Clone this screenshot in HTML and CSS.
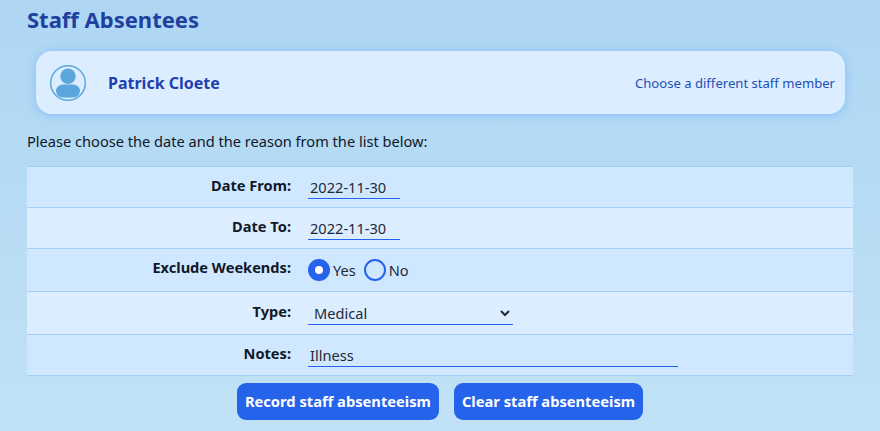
FILE: index.html
```html
<!DOCTYPE html>
<html lang="en">
<head>
<meta charset="utf-8">
<title>Staff Absentees</title>
<link rel="stylesheet" href="styles.css">
</head>
<body>
<main class="page">
  <h1 class="title">Staff Absentees</h1>
  <section class="staff-card">
    <svg class="avatar" viewBox="0 0 38 38" width="38" height="38" aria-hidden="true">
      <circle cx="19" cy="19" r="17.300" fill="none" stroke="#5ba6dd" stroke-width="1.500"/>
      <circle cx="19" cy="12.300" r="7.700" fill="#5ba6dd"/>
      <rect x="7" y="20.500" width="24" height="13" rx="6.500" fill="#5ba6dd"/>
    </svg>
    <span class="staff-name">Patrick Cloete</span>
    <a class="staff-link">Choose a different staff member</a>
  </section>
  <p class="intro">Please choose the date and the reason from the list below:</p>
  <form class="form">
    <div class="row row-odd">
      <label class="label" for="from">Date From:</label>
      <input class="field field-date" id="from" type="text" value="2022-11-30">
    </div>
    <div class="row row-even">
      <label class="label" for="to">Date To:</label>
      <input class="field field-date" id="to" type="text" value="2022-11-30">
    </div>
    <div class="row row-odd row-tall">
      <span class="label label-radio">Exclude Weekends:</span>
      <div class="radios">
        <span class="radio radio-on"></span><span class="radio-text">Yes</span>
        <span class="radio"></span><span class="radio-text">No</span>
      </div>
    </div>
    <div class="row row-even row-tall">
      <label class="label" for="type">Type:</label>
      <select class="field field-select" id="type"><option>Medical</option></select>
    </div>
    <div class="row row-odd">
      <label class="label" for="notes">Notes:</label>
      <input class="field field-notes" id="notes" type="text" value="Illness">
    </div>
    <div class="actions">
      <button class="btn" type="button">Record staff absenteeism</button>
      <button class="btn" type="button">Clear staff absenteeism</button>
    </div>
  </form>
</main>
</body>
</html>
```

FILE: styles.css
```css
* { box-sizing: border-box; }
html, body { height: 100%; }
body {
  margin: 0;
  overflow: hidden;
  background: linear-gradient(180deg, #aed6f3 0%, #c1e2f6 100%);
  font-family: "Noto Sans", sans-serif;
  color: #111827;
}
.page { padding: 5px 27px 0; }
.title {
  margin: 0;
  height: 28px;
  font-size: 22px;
  line-height: 28px;
  font-weight: 700;
  color: #1e40a0;
}
.staff-card {
  display: flex;
  align-items: center;
  height: 63px;
  margin: 18px 8px 0 9px;
  padding: 0 10px 0 13px;
  background: #dcedff;
  border-radius: 16px;
  box-shadow: 0 1px 10px #85bdf8;
}
.avatar { flex: none; }
.staff-name {
  margin-left: 21px;
  font-size: 16px;
  font-weight: 700;
  color: #1e40af;
}
.staff-link {
  margin-left: auto;
  font-size: 13.1px;
  color: #1e4fb5;
}
.intro {
  margin: 17px 0 0;
  height: 20px;
  font-size: 14.6px;
  line-height: 20px;
}
.form { margin-top: 15px; }
.row {
  display: flex;
  align-items: center;
  height: 41px;
  border-bottom: 1px solid #a3d0fb;
}
.row:first-child { height: 42px; border-top: 1px solid #a3d0fb; }
.row-tall { height: 43px; }
.row-odd { background: #d0e8ff; }
.row-even { background: #dcedff; }
.label {
  flex: none;
  width: 264px;
  margin-right: 17px;
  text-align: right;
  font-size: 14.6px;
  font-weight: 700;
  color: #111827;
  position: relative;
  top: -2px;
}
.label-radio { top: -3px; }
.field {
  display: block;
  height: 24px;
  padding: 0 2px;
  border: 0;
  border-bottom: 1px solid #2563eb;
  border-radius: 0;
  background: transparent;
  outline: none;
  font-family: inherit;
  font-size: 14.6px;
  color: #1f2937;
}
.field-date { width: 92px; }
.field-select { width: 205px; padding: 0 2px; }
.field-notes { width: 370px; }
.radios { display: flex; align-items: center; font-size: 14.6px; color: #1f2937; }
.radio {
  width: 22px;
  height: 22px;
  border-radius: 50%;
  border: 2px solid #2563eb;
  background: transparent;
}
.radio-on {
  background: #fff;
  border: 7px solid #2563eb;
}
.radio-text { margin: 0 8px 0 3px; }
.actions {
  display: flex;
  justify-content: center;
  gap: 15px;
  margin-top: 7px;
}
.btn {
  height: 37px;
  padding: 0 8px 2px;
  border: 0;
  border-radius: 9px;
  background: #2563eb;
  color: #fff;
  font-family: inherit;
  font-size: 14.7px;
  font-weight: 700;
}
```
